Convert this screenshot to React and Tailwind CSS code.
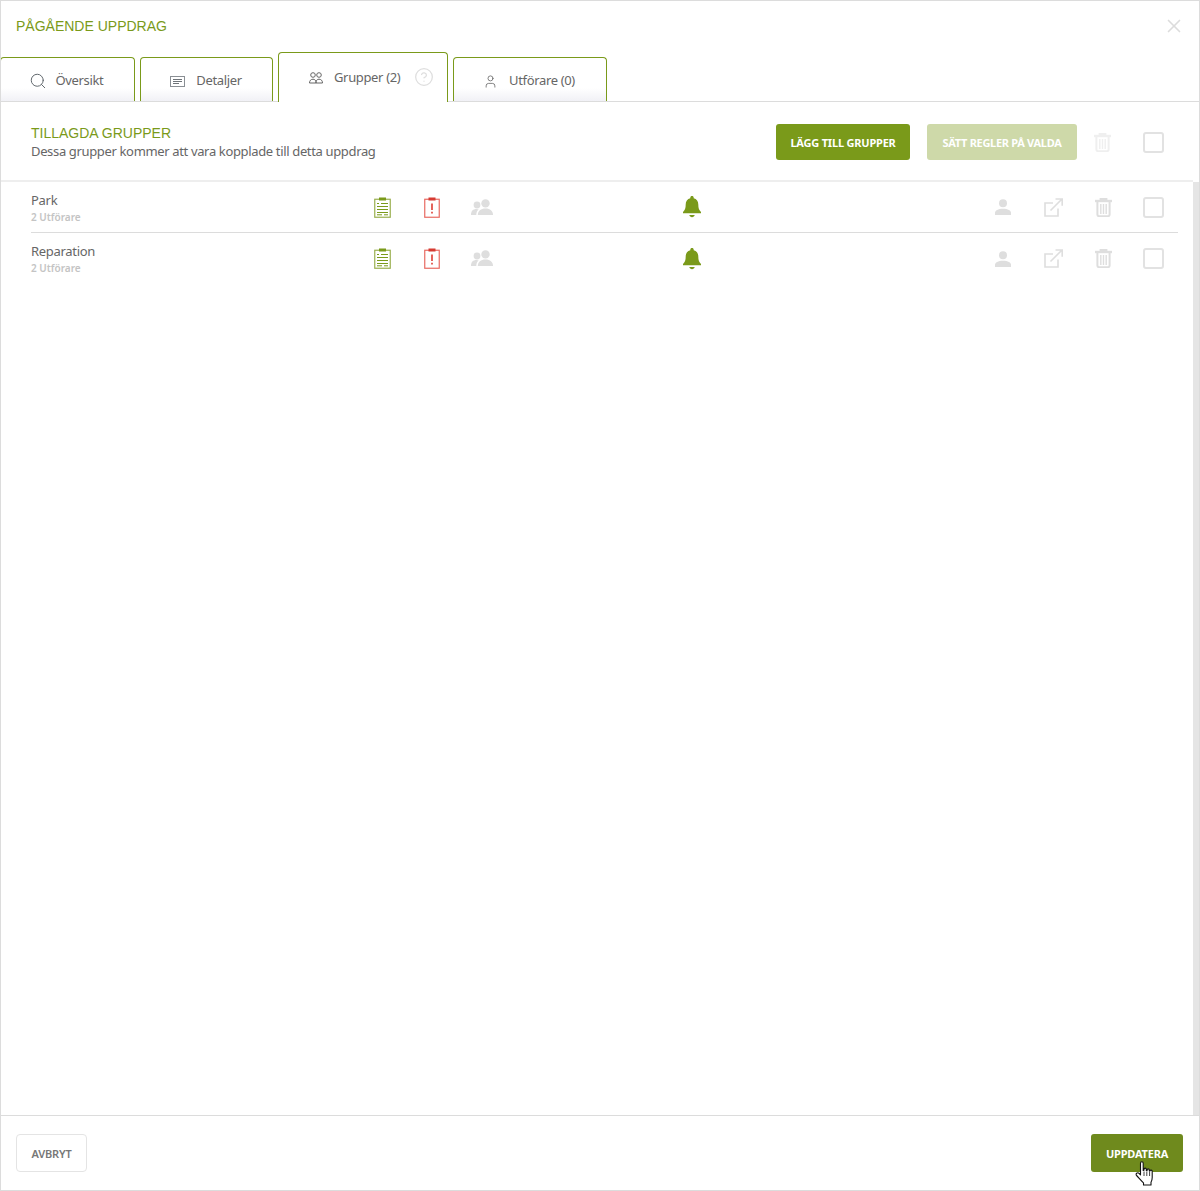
import { Search, User, CircleHelp, X } from "lucide-react";

const body = "font-['Noto_Sans','Open_Sans',sans-serif]";
const arial = "font-['Liberation_Sans',Arial,sans-serif]";

const ClipboardList = () => (
  <svg width="17" height="21" viewBox="0 0 17 21" fill="none">
    <rect x="0.75" y="2.25" width="15.5" height="18" stroke="#9ab04f" strokeWidth="1.2" />
    <rect x="5" y="0.5" width="7" height="3" fill="#7a9a1a" />
    <path d="M3 6.5h2M7 6.5h7M3 9.5h11M3 12.5h11M3 15.5h11M3 17.8h5M10 17.8h4" stroke="#7a9a1a" strokeWidth="1" />
  </svg>
);

const ClipboardAlert = () => (
  <svg width="16" height="21" viewBox="0 0 16 21" fill="none">
    <rect x="0.75" y="2.25" width="14.5" height="18" stroke="#e86a62" strokeWidth="1.2" />
    <rect x="4.5" y="0.5" width="7" height="3" fill="#d63b32" />
    <path d="M8 6.5v6.5" stroke="#e2534a" strokeWidth="1.8" />
    <path d="M8 14.8v1.8" stroke="#e2534a" strokeWidth="1.8" />
  </svg>
);

const GroupSolid = () => (
  <svg width="22" height="17" viewBox="0 0 22 17" fill="#dedede">
    <circle cx="6" cy="6" r="3.4" />
    <circle cx="14.5" cy="4.4" r="4.2" />
    <path d="M0 16c0-4 2-6 5.5-6 1 0 1.6.2 2.2.5C6 11.8 5.4 13.6 5.3 16z" />
    <path d="M6.8 16c0-4 3-6.5 7.700-6.500S22 12 22 16z" />
  </svg>
);

const GroupOutline = () => (
  <svg width="14" height="12" viewBox="0 0 14 12" fill="none" stroke="#666" strokeWidth="1">
    <circle cx="4" cy="3" r="2.300" />
    <circle cx="10" cy="3" r="2.300" />
    <path d="M.5 11c0-2.500 1.500-3.800 3.500-3.800S7 8.500 7 11zM7 11c0-2.500 1-3.800 3-3.800s3.500 1.300 3.500 3.800z" />
  </svg>
);

const Bell = () => (
  <svg width="18" height="22" viewBox="0 0 18 22" fill="#7a9a1a">
    <path d="M9 0c1 0 1.700.7 1.700 1.700v.6c3 .7 4.600 3 4.600 6.200 0 3.700.8 5.600 2.700 7.500v1.200H0V16c1.900-1.900 2.700-3.800 2.700-7.500 0-3.200 1.600-5.500 4.600-6.200v-.6C7.300.7 8 0 9 0z" />
    <path d="M6.300 19h5.400c-.3 1.300-1.400 2.200-2.700 2.200S6.600 20.300 6.300 19z" />
  </svg>
);

const PersonSolid = () => (
  <svg width="16" height="16" viewBox="0 0 16 16" fill="#dedede">
    <circle cx="8" cy="4.200" r="4" />
    <path d="M0 16v-2c0-2.600 3-4.200 8-4.200s8 1.600 8 4.200v2z" />
  </svg>
);

const External = () => (
  <svg width="19" height="19" viewBox="0 0 19 19" fill="none" stroke="#dedede" strokeWidth="1.6">
    <path d="M14 10.500V18H1V5h8" />
    <path d="M6.500 12.500L17.500 1.500M11.500 1h6.700v6.700" />
  </svg>
);

const Trash = ({ faded }) => (
  <svg width="17" height="19" viewBox="0 0 17 19" fill="none" stroke={faded ? "#efefef" : "#dedede"}>
    <path d="M0 3h17" strokeWidth="2.400" />
    <path d="M5.500 2.500V1h6v1.500" strokeWidth="1.800" />
    <path d="M2.400 4v12.500c0 1 .8 1.700 1.700 1.700h8.800c.9 0 1.700-.7 1.700-1.700V4" strokeWidth="2" />
    <path d="M5.800 6v10M8.500 6v10M11.200 6v10" strokeWidth="1.400" />
  </svg>
);

const Check = () => (
  <span className="block w-[21px] h-[21px] border-2 border-[#e2e2e2] rounded-[3px]" />
);

const DetailsIcon = () => (
  <svg width="15" height="11" viewBox="0 0 15 11" fill="none" strokeWidth="1">
    <rect x="0.500" y="0.500" width="14" height="10" stroke="#8a8f94" />
    <path d="M3 3.500h9M3 5.500h9M3 7.500h6" stroke="#6f7479" />
  </svg>
);

const Hand = () => (
  <svg width="20" height="25" viewBox="0 0 20 25" fill="#fff" stroke="#111" strokeWidth="1.100" strokeLinejoin="round">
    <path d="M5.500 2.200c0-2 2.700-2 2.700 0v7.300l.8-.2V8.200c0-1.500 2.300-1.500 2.300 0v1.300l.8.100V8.900c0-1.400 2.200-1.400 2.200 0v1l.7.100c0-1.300 2.200-1.200 2.200.3v6.200c0 2.200-.4 3.500-1.200 4.700v2.800H8.500v-2.200c-2-1.800-4-4.200-6.900-7.300-1.500-1.700.9-3.700 2.600-2l1.300 1.300z" />
    <path d="M9 10.500v4.500M11.800 10.500v4.500M14.600 10.500v4.500" strokeWidth="0.800" />
  </svg>
);

const tabs = [
  { label: "Översikt", icon: <Search size={18} strokeWidth={1.3} color="#5f666b" />, w: "w-[135px] -ml-px pr-[3px]", gap: "gap-[9px]" },
  { label: "Detaljer", icon: <DetailsIcon />, w: "w-[133px] pr-[1px]", gap: "gap-[11px]" },
];

const groups = [
  { name: "Park", sub: "2 Utförare" },
  { name: "Reparation", sub: "2 Utförare" },
];

const Cell = ({ children }) => <div className="flex items-center justify-center">{children}</div>;

const App = () => {
  return (
    <div className={`${body} relative w-[1200px] h-[1191px] bg-white border border-[#dcdcdc] flex flex-col overflow-hidden text-[#666]`}>
      <header className="h-[100px] shrink-0 relative border-b border-[#dcdcdc] box-content">
        <div className="flex items-center justify-between pt-[15px] pl-[15px] pr-[14px] h-[51px]">
          <h1 className={`${arial} text-[14px] pb-[16px] text-[#7a9a1a] leading-[20px]`}>PÅGÅENDE UPPDRAG</h1>
          <X size={22} strokeWidth={1.8} color="#dcdcdc" className="mb-[16px]" />
        </div>
        <div className="flex items-end h-[50px] -mt-[1px]">
          {tabs.map((t) => (
            <div key={t.label} className={`${t.w} h-[44px] pt-[3px] mr-[5px] border border-b-0 border-[#7a9a1a] rounded-t-[4px] bg-gradient-to-b from-white from-70% to-[#f1f1f6] flex items-center justify-center ${t.gap} text-[13px] tracking-[-0.35px]`}>
              {t.icon}
              <span>{t.label}</span>
            </div>
          ))}
          <div className="w-[170px] h-[50px] mr-[5px] border border-b-0 border-[#7a9a1a] rounded-t-[4px] bg-white relative z-10 translate-y-px flex items-start pt-[14px] pl-[30px] text-[13px] tracking-[-0.35px]">
            <span className="mt-[5px]"><GroupOutline /></span>
            <span className="ml-[11px] leading-[20px]">Grupper (2)</span>
            <CircleHelp size={20} strokeWidth={1.500} color="#dedede" className="ml-[14px]" />
          </div>
          <div className="w-[154px] h-[44px] pt-[3px] pr-[2px] border border-b-0 border-[#7a9a1a] rounded-t-[4px] bg-gradient-to-b from-white from-70% to-[#f1f1f6] flex items-center justify-center gap-[11px] text-[13px] tracking-[-0.35px]">
            <User size={15} strokeWidth={1.300} color="#666" />
            <span>Utförare (0)</span>
          </div>
        </div>
      </header>

      <main className="flex-1 flex flex-col min-h-0">
        <section className="h-[78px] shrink-0 flex pl-[30px] pr-[21px] pt-[22px]">
          <div className="flex-1 pt-[1px]">
            <h2 className={`${arial} text-[14px] leading-[16px] text-[#7a9a1a]`}>TILLAGDA GRUPPER</h2>
            <p className="mt-[1px] text-[13px] leading-[18px] tracking-[-0.35px]">Dessa grupper kommer att vara kopplade till detta uppdrag</p>
          </div>
          <button className="w-[134px] h-[36px] pt-[2px] bg-[#7a9a1a] rounded-[3px] text-white font-bold text-[11px] tracking-[-0.2px]">LÄGG TILL GRUPPER</button>
          <button className="w-[150px] h-[36px] pt-[2px] ml-[17px] bg-[#ced9a9] rounded-[3px] text-white font-bold text-[11px] tracking-[-0.3px]">SÄTT REGLER PÅ VALDA</button>
          <div className="w-[51px] flex justify-center pt-[9px]"><Trash faded /></div>
          <div className="w-[50px] flex justify-center pt-[8px]"><Check /></div>
        </section>

        <div className="flex-1 flex min-h-0">
          <div className="flex-1 border-t-2 border-[#eeeeee] pl-[30px] pr-[15px]">
            {groups.map((g, i) => (
              <div key={g.name} className={`grid grid-cols-[326px_50px_50px_50px_160px_50px_261px_50px_50px_50px_50px] h-[51px] ${i === 0 ? "border-b border-[#dcdcdc]" : ""}`}>
                <div className="pt-[9px]">
                  <div className="text-[13px] leading-[19px] tracking-[-0.3px]">{g.name}</div>
                  <div className="text-[10px] leading-[14px] font-semibold text-[#c4c4c4]">{g.sub}</div>
                </div>
                <Cell><ClipboardList /></Cell>
                <Cell><ClipboardAlert /></Cell>
                <Cell><GroupSolid /></Cell>
                <div />
                <Cell><Bell /></Cell>
                <div />
                <Cell><PersonSolid /></Cell>
                <Cell><External /></Cell>
                <Cell><Trash /></Cell>
                <Cell><Check /></Cell>
              </div>
            ))}
          </div>
          <div className="w-[6px] shrink-0 mt-[2px] bg-[#e5e5e5]" />
        </div>
      </main>

      <footer className="h-[75px] shrink-0 border-t border-[#dcdcdc] flex items-center justify-between pl-[15px] pr-[16px]">
        <button className="w-[71px] h-[38px] pt-[2px] border border-[#e4e4e4] rounded-[4px] bg-white font-semibold text-[11px] text-[#777] tracking-[-0.2px]">AVBRYT</button>
        <button className="w-[92px] h-[38px] pt-[2px] bg-[#6f8a1d] rounded-[3px] text-white font-bold text-[11px] tracking-[-0.2px]">UPPDATERA</button>
      </footer>

      <div className="absolute left-[1134px] top-[1160px]"><Hand /></div>
    </div>
  );
};

export default App;
